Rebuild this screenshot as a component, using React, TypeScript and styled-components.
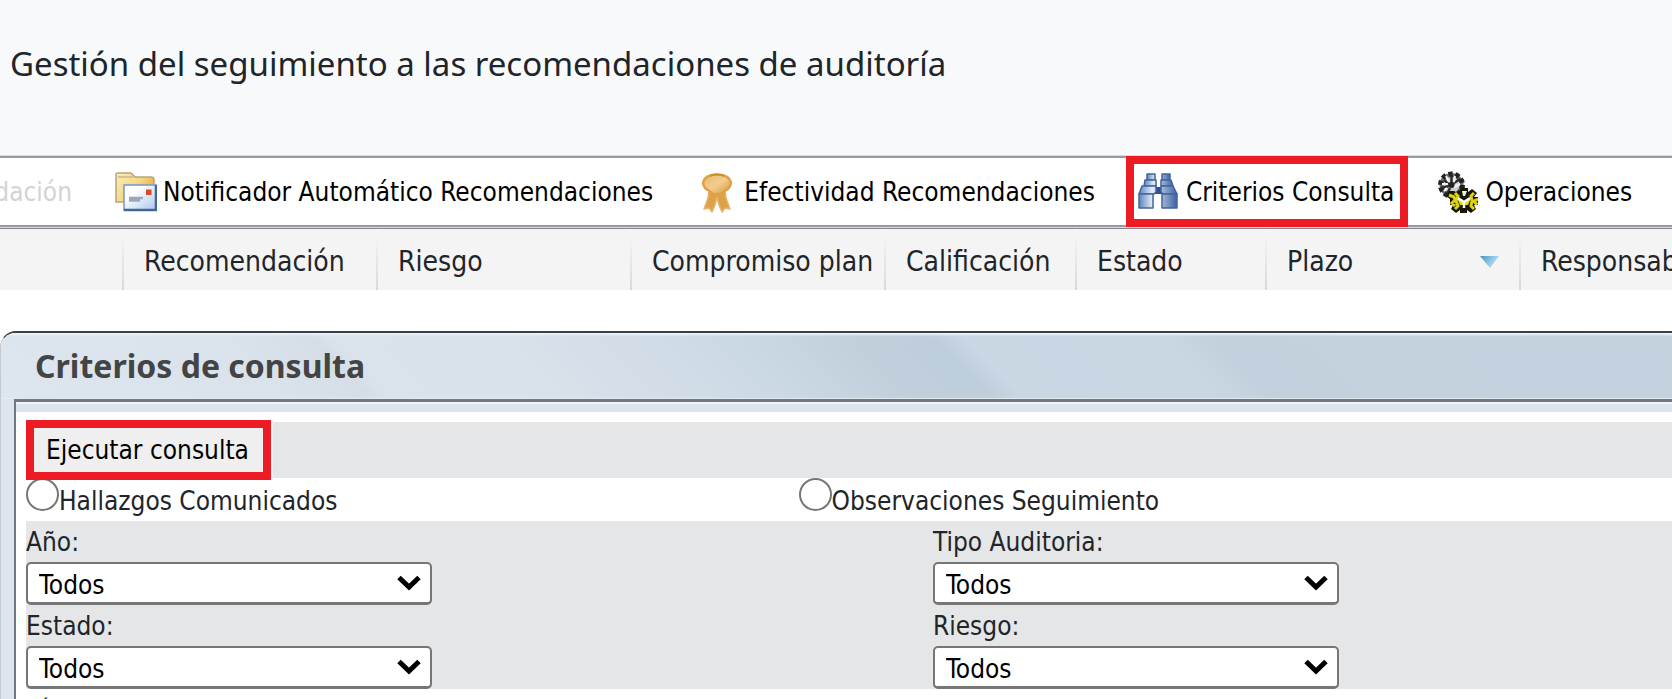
import React from 'react';
import styled, { createGlobalStyle, css } from 'styled-components';

const GlobalStyle = createGlobalStyle`
  *, *::before, *::after { box-sizing: border-box; }
  body {
    margin: 0;
    background: #ffffff;
    color: #212529;
    font-family: "DejaVu Sans Condensed", "DejaVu Sans", Tahoma, sans-serif;
    font-size: 26px;
  }
`;

const Page = styled.div`
  height: 100vh;
  overflow: hidden;
`;

const Banner = styled.header`
  height: 155px;
  padding: 41px 10px 0;
  background: #f8f9fb;
`;

const PageTitle = styled.h1`
  margin: 0;
  font-family: "Noto Sans", "Open Sans", sans-serif;
  font-size: 33px;
  font-weight: 400;
  line-height: 46px;
  white-space: nowrap;
`;

const Toolbar = styled.nav`
  display: flex;
  align-items: center;
  gap: 43px;
  height: 71px;
  border-top: 2px solid #999999;
  border-bottom: 2px solid #999999;
  outline: 1px solid #dddddd;
  margin-top: 1px;
`;

const ClippedItem = styled.button`
  display: flex;
  justify-content: flex-end;
  flex: none;
  width: 72px;
  padding: 0;
  border: 0;
  background: none;
  color: #d3d3d3;
  font: inherit;
  overflow: hidden;
`;

const ToolButton = styled.button<{ $marked?: boolean }>`
  display: flex;
  align-items: center;
  flex: none;
  gap: 6px;
  padding: 0;
  border: 0;
  background: none;
  color: #000000;
  font: inherit;
  white-space: nowrap;

  ${({ $marked }) =>
    $marked &&
    css`
      position: relative;
      align-self: stretch;
      margin: -2px -14px -2px -12px;
      padding: 0 6px 0 4px;
      border: 8px solid #ed1c24;
      background: #ffffff;
    `}
`;

const ToolIcon = styled.svg`
  flex: none;
  width: 42px;
  height: 42px;
`;

const GridFrame = styled.div`
  border-top: 2px solid #808490;
  overflow: hidden;
`;

const GridTable = styled.table`
  width: 1774px;
  table-layout: fixed;
  border-collapse: collapse;
  background: #f4f4f4;
`;

const HeadCell = styled.th<{ $width: number }>`
  width: ${({ $width }) => $width}px;
  height: 61px;
  padding: 4px 0 0 20px;
  background: linear-gradient(#f8f8f8, #d6d8da) right / 2px 100% no-repeat;
  font-size: 28px;
  font-weight: 400;
  line-height: 36px;
  text-align: left;
  white-space: nowrap;
`;

const HeadContent = styled.span`
  display: flex;
  align-items: center;
  justify-content: space-between;
  padding-right: 22px;
`;

const SortArrow = styled.svg`
  width: 19px;
  height: 12px;
`;

const Panel = styled.section`
  margin-top: 41px;
  padding-left: 13px;
  border-top: 2px solid #3b4046;
  border-left: 1px solid #c3c9d0;
  border-top-left-radius: 16px;
  background: #dce4ee;
  overflow: hidden;
`;

const PanelHead = styled.div`
  display: flex;
  align-items: center;
  height: 66px;
  margin-left: -13px;
  padding-left: 34px;
  background: linear-gradient(
    45deg,
    #dde5ee 0,
    #dae3ec 200px,
    #d5dee7 262px,
    #dae3ec 278px,
    #d9e1ea 400px,
    #cbd9e5 560px,
    #c1cfdc 650px,
    #bfcedb 702px,
    #c9d7e4 724px,
    #c8d6e2 870px,
    #c1d0dc 904px,
    #c4d2de 1020px,
    #c3d1de 100%
  );
  box-shadow: inset 0 3px 2px -1px #edf3f8, inset 0 -2px 1px -1px #e4ebf2;
`;

const PanelTitle = styled.h2`
  margin: 0;
  color: #444444;
  font-family: "Noto Sans", "Open Sans", sans-serif;
  font-size: 32px;
  font-weight: 700;
  line-height: 44px;
`;

const PanelBody = styled.div`
  border-top: 3px solid #71787f;
  border-left: 2px solid #71787f;
  background: #ffffff;
`;

const PanelTrim = styled.div`
  height: 10px;
  border-top: 2px solid #f3f6fa;
  background: #dce4ee;
`;

const Form = styled.form`
  padding: 10px 0 0 10px;
`;

const ActionRow = styled.div`
  display: flex;
  height: 56px;
  background: #e5e6e8;
`;

const RunButton = styled.button`
  position: relative;
  margin: -2px 0;
  padding: 0 14px 0 12px;
  border: 8px solid #ed1c24;
  background: #efefef;
  box-shadow: 2px 0 0 #f7f7f7;
  color: #000000;
  font: inherit;
  white-space: nowrap;
`;

const RadioRow = styled.div`
  display: grid;
  grid-template-columns: 23fr 26fr;
  height: 43px;
`;

const RadioLabel = styled.label`
  display: flex;
  align-items: flex-end;
  line-height: 39px;
`;

const Radio = styled.input`
  align-self: flex-start;
  appearance: none;
  width: 33px;
  height: 33px;
  margin: 0;
  border: 2px solid #767676;
  border-radius: 50%;
  background: #ffffff;

  &:checked {
    background: radial-gradient(#0075ff 55%, #ffffff 60%);
  }
`;

const FieldRow = styled.div<{ $shaded?: boolean }>`
  display: grid;
  grid-template-columns: 27fr 22fr;
  background: ${({ $shaded }) => ($shaded ? '#e5e6e8' : '#ffffff')};
`;

const FieldLabel = styled.label`
  display: block;
  height: 41px;
  padding-top: 2px;
  line-height: 38px;
`;

const SelectBox = styled.div`
  position: relative;
  width: 406px;
`;

const Select = styled.select`
  display: block;
  appearance: none;
  width: 100%;
  height: 43px;
  padding: 4px 40px 0 11px;
  border: 2px solid #767676;
  border-bottom-width: 3px;
  border-radius: 5px;
  background: #ffffff;
  color: #000000;
  font: inherit;
`;

const Chevron = styled.svg`
  position: absolute;
  top: 13px;
  right: 11px;
  width: 24px;
  height: 16px;
  pointer-events: none;
`;

const FolderMailIcon = () => (
  <ToolIcon viewBox="0 0 42 42" aria-hidden="true">
    <defs>
      <linearGradient id="folder" x1="0" y1="0" x2="1" y2="0.6">
        <stop offset="0" stopColor="#f9edbd" />
        <stop offset="0.6" stopColor="#f5d67e" />
        <stop offset="1" stopColor="#e6a936" />
      </linearGradient>
      <linearGradient id="mail" x1="0" y1="0" x2="1" y2="1">
        <stop offset="0.3" stopColor="#ffffff" />
        <stop offset="1" stopColor="#a9c6ef" />
      </linearGradient>
    </defs>
    <path d="M1 31V3q0-1 2-1h12q2 0 3 2l2 2h16q3 0 3 3v22z" fill="url(#folder)" stroke="#b3a583" strokeWidth="1.5" />
    <path d="M3 6h15" stroke="#cdb878" strokeWidth="1.5" />
    <rect x="9" y="14" width="32" height="25" fill="url(#mail)" stroke="#7d9cc9" strokeWidth="1.6" />
    <path d="M41 14v25H9" fill="none" stroke="#466592" strokeWidth="2.5" />
    <rect x="31" y="18.500" width="5.500" height="5.500" fill="#d84a28" />
    <path d="M14 29.500h11M14 27h14" stroke="#9aa8ba" strokeWidth="2.500" />
  </ToolIcon>
);

const RibbonIcon = () => (
  <ToolIcon viewBox="0 0 42 42" aria-hidden="true">
    <defs>
      <linearGradient id="ribbon" x1="0" y1="0" x2="1" y2="1">
        <stop offset="0" stopColor="#eab865" />
        <stop offset="0.5" stopColor="#f2cc90" />
        <stop offset="1" stopColor="#dc9a34" />
      </linearGradient>
    </defs>
    <path d="M13 19l-1 8-4 11 5-1 3 4 3-7 2-8 2 8 3 7 3-4 5 1-4-11-1-8z" fill="#dfa145" stroke="#e6b56c" strokeWidth="1.5" strokeLinejoin="round" />
    <path d="M13 5q8-3 16 0 5 2 6 7-1 6-6 7.500L25 23h-8l-4-3.500Q8 18 7 12q1-5 6-7z" fill="url(#ribbon)" stroke="#dfa24a" strokeWidth="2.500" />
    <path d="M14 4.500q7-2 14 0" fill="none" stroke="#d28c24" strokeWidth="2" />
  </ToolIcon>
);

const BinocularsIcon = () => (
  <ToolIcon viewBox="0 0 42 42" aria-hidden="true">
    <defs>
      <linearGradient id="lens" x1="0" y1="0" x2="1" y2="0">
        <stop offset="0" stopColor="#5f84bb" />
        <stop offset="0.35" stopColor="#e4edf8" />
        <stop offset="1" stopColor="#3c62a4" />
      </linearGradient>
    </defs>
    <path d="M15 16h10v7H15z" fill="#2c4f91" />
    <g fill="url(#lens)" stroke="#42659f" strokeWidth="1.500" strokeLinejoin="round">
      <path d="M9 3h8v6H9zM24 3h8v6h-8z" />
      <path d="M7 9h11v6H6zM23 9h10l2 6H23z" />
      <path d="M4 15h14v6l-2 2H1zM23 15h12l4 8H25l-2-2z" />
      <path d="M1 23h14v14H1zM24 23h15v14H24z" />
    </g>
  </ToolIcon>
);

const GearsIcon = () => (
  <ToolIcon viewBox="0 0 42 42" aria-hidden="true">
    <g fill="none">
      <circle cx="14.500" cy="14" r="10" fill="#d0d0d0" stroke="#6a6a6a" strokeWidth="4" />
      <circle cx="14.500" cy="14" r="11" stroke="#222222" strokeWidth="5" strokeDasharray="4.200 2.712" />
      <path d="M14.500 4v8M7 9l5 4M4 17l8-2M23 8l-6 4M10 23l3-6" stroke="#2b2b2b" strokeWidth="2.500" />
      <path d="M9 5l3 6M18 5l-1 6M5 13h6M17 16l6-3M7 20l3-3" stroke="#f4f4f4" strokeWidth="2" />
      <circle cx="14.500" cy="14" r="3" fill="#222222" />
      <path d="M24 17h7v4l4-3 5 4-3 4h4v8h-4l2 4-5 4-4-3v4h-7v-4l-4 3-5-4 2-4h-3v-6l-4-3 3-5h5l4 2z" fill="#181704" />
      <path d="M18 22l3 3-2 5 2 5-3 3M37 22l-3 3 1 5-1 5 3 3M12 24l5 2 1 3-3 3 3 3M41 28l-4 2 3 4" stroke="#ddd314" strokeWidth="3" />
      <path d="M20 27l7 4 7-4-3 7h-8z" fill="#e6dc1c" />
      <path d="M21 27l6 4 6-4M27 31v6" stroke="#ffffff" strokeWidth="2.500" />
      <path d="M25 20h5l-2 5h-2z" fill="#f2f2e4" />
    </g>
  </ToolIcon>
);

const COLUMNS = [
  { name: '', width: 124 },
  { name: 'Recomendación', width: 254 },
  { name: 'Riesgo', width: 254 },
  { name: 'Compromiso plan', width: 254 },
  { name: 'Calificación', width: 191 },
  { name: 'Estado', width: 190 },
  { name: 'Plazo', width: 254, sorted: true },
  { name: 'Responsable', width: 253 },
];

const Field = ({ id, label }: { id: string; label: string }) => (
  <div>
    <FieldLabel htmlFor={id}>{label}</FieldLabel>
    <SelectBox>
      <Select id={id} defaultValue="todos">
        <option value="todos">Todos</option>
      </Select>
      <Chevron viewBox="0 0 24 16" aria-hidden="true">
        <path d="M2 2.500l10 9.500L22 2.500" fill="none" stroke="#000000" strokeWidth="5" />
      </Chevron>
    </SelectBox>
  </div>
);

export default function App() {
  return (
    <Page>
      <GlobalStyle />
      <Banner>
        <PageTitle>Gestión del seguimiento a las recomendaciones de auditoría</PageTitle>
      </Banner>

      <Toolbar>
        <ClippedItem type="button" disabled>dación</ClippedItem>
        <ToolButton type="button"><FolderMailIcon />Notificador Automático Recomendaciones</ToolButton>
        <ToolButton type="button"><RibbonIcon />Efectividad Recomendaciones</ToolButton>
        <ToolButton type="button" $marked><BinocularsIcon />Criterios Consulta</ToolButton>
        <ToolButton type="button"><GearsIcon />Operaciones</ToolButton>
      </Toolbar>

      <GridFrame>
        <GridTable>
          <thead>
            <tr>
              {COLUMNS.map(({ name, width, sorted }) => (
                <HeadCell key={name} $width={width} scope="col">
                  <HeadContent>
                    {name}
                    {sorted && (
                      <SortArrow viewBox="0 0 19 12" aria-hidden="true">
                        <defs>
                          <linearGradient id="sort" x1="0" y1="0" x2="1" y2="0.5">
                            <stop offset="0" stopColor="#4f8fae" />
                            <stop offset="0.5" stopColor="#7fc0e2" />
                            <stop offset="1" stopColor="#c4e4f5" />
                          </linearGradient>
                        </defs>
                        <path d="M0 0h19L10 12z" fill="url(#sort)" />
                      </SortArrow>
                    )}
                  </HeadContent>
                </HeadCell>
              ))}
            </tr>
          </thead>
        </GridTable>
      </GridFrame>

      <Panel>
        <PanelHead>
          <PanelTitle>Criterios de consulta</PanelTitle>
        </PanelHead>
        <PanelBody>
          <PanelTrim />
          <Form onSubmit={(event) => event.preventDefault()}>
            <ActionRow>
              <RunButton type="submit">Ejecutar consulta</RunButton>
            </ActionRow>
            <RadioRow>
              <RadioLabel><Radio type="radio" name="origen" value="hallazgos" />Hallazgos Comunicados</RadioLabel>
              <RadioLabel><Radio type="radio" name="origen" value="observaciones" />Observaciones Seguimiento</RadioLabel>
            </RadioRow>
            <FieldRow $shaded>
              <Field id="anio" label="Año:" />
              <Field id="tipo" label="Tipo Auditoria:" />
            </FieldRow>
            <FieldRow $shaded>
              <Field id="estado" label="Estado:" />
              <Field id="riesgo" label="Riesgo:" />
            </FieldRow>
            <FieldRow>
              <Field id="titulo" label="Título:" />
            </FieldRow>
          </Form>
        </PanelBody>
      </Panel>
    </Page>
  );
}
